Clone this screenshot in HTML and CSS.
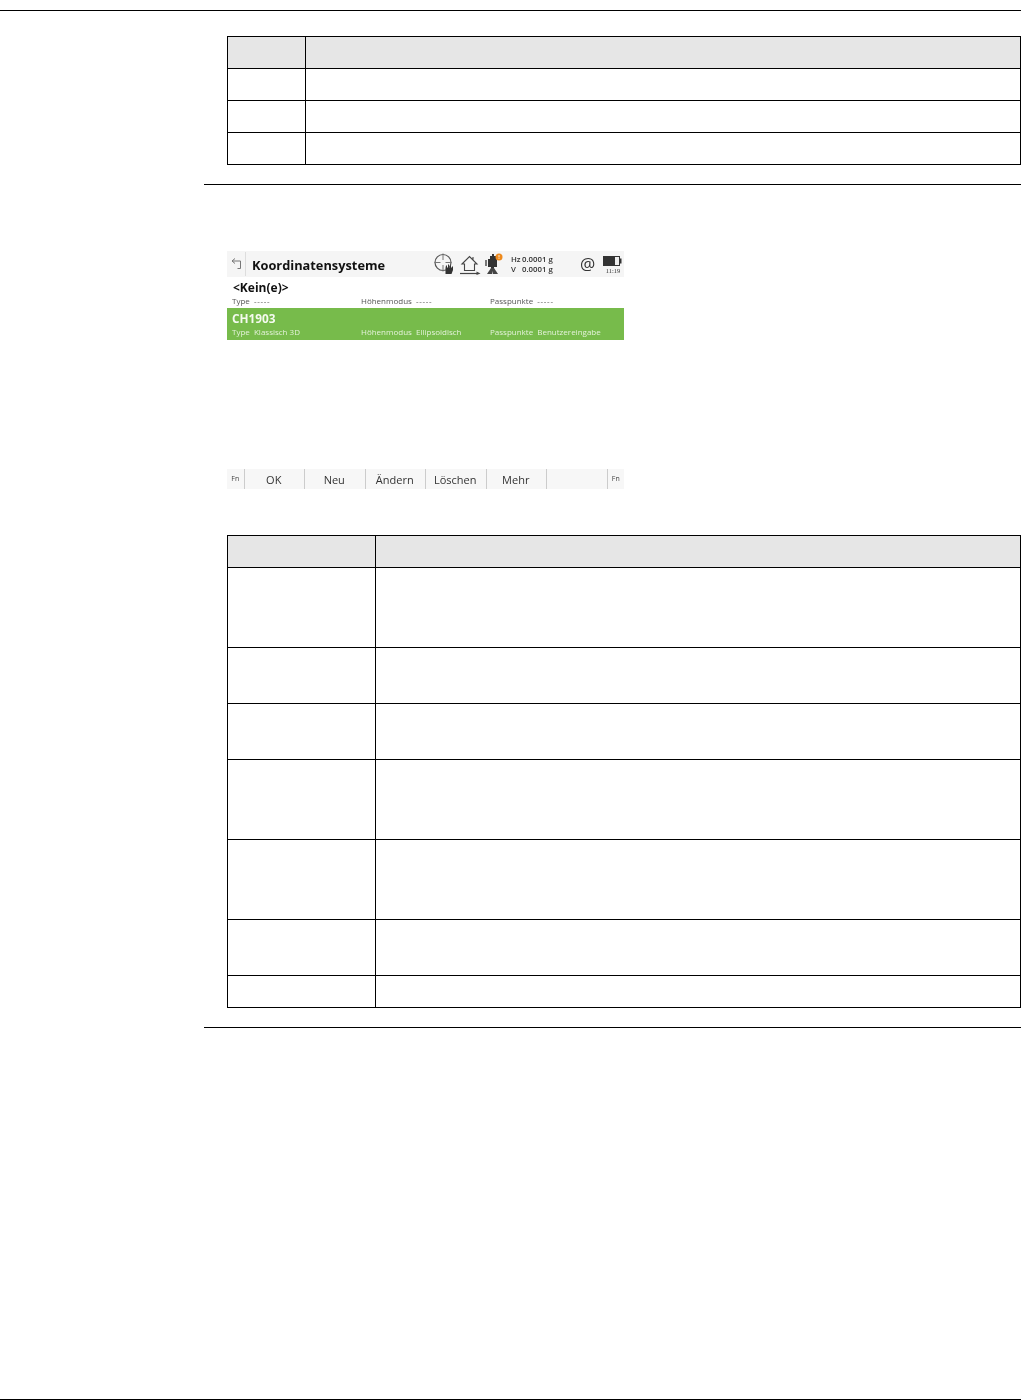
FILE: index.html
```html
<!DOCTYPE html>
<html lang="de">
	<head>
		<title>Koordinatensysteme</title>
		<meta charset="utf-8">
		<link rel="stylesheet" href="styles.css">
	</head>
	<body>
		<div class="toprule"></div>
		<main class="content">
			<table class="grid grid-small">
				<tr class="head"><td class="c1"></td><td></td></tr>
				<tr><td></td><td></td></tr>
				<tr><td></td><td></td></tr>
				<tr><td></td><td></td></tr>
			</table>
			<div class="sectionrule"></div>

			<div class="screen">
				<div class="titlebar">
					<svg class="back" width="14" height="14" viewBox="0 0 14 14"><path d="M5 1.500L2 4L5 6.500M2 4H10.500V11.500H7.500" fill="none" stroke="#777" stroke-width="1"/></svg>
					<span class="titlebar-sep"></span>
					<span class="titletext">Koordinatensysteme</span>
					<svg class="ico-target" width="21" height="22" viewBox="0 0 21 22">
						<circle cx="9" cy="9.500" r="8" fill="none" stroke="#555" stroke-width="1.200"/>
						<path d="M9 0.500V7M9 12V18.500M0.500 9.500H6.500M11.500 9.500H17.500" stroke="#777" stroke-width="1"/>
						<path d="M11.500 21V15L12 12.500H13V14.500H14V11.500H15V14.500H16V12.500H17V14.500H18V13.500H19V17L17.500 21Z" fill="#333"/>
					</svg>
					<svg class="ico-home" width="21" height="22" viewBox="0 0 21 22">
						<path d="M2 11L9.500 3.500L17 11H14.500V17.500H4.500V11Z M13 4V7" fill="none" stroke="#444" stroke-width="1.100"/>
						<path d="M0 20.500H17" stroke="#444" stroke-width="1.200"/>
						<path d="M16.500 18.500L20.500 20.500L16.500 22Z" fill="#444"/>
					</svg>
					<svg class="ico-total" width="20" height="22" viewBox="0 0 20 22">
						<path d="M4 6H6V3H8V1H10V3H12V6H13V14H10V16H7V14H4Z" fill="#333"/>
						<path d="M1 7H3V13H1Z" fill="#777"/>
						<path d="M3 21L7 15H10L14 21Z" fill="#444"/>
						<path d="M8 21L8.500 18L9 21Z" fill="#ddd"/>
						<circle cx="15" cy="4" r="3.500" fill="#ee8a1d"/>
						<path d="M15 2V4.500M15 5.200V6" stroke="#fff" stroke-width="0.800"/>
					</svg>
					<div class="angles">
						<div><span class="ang-l">Hz</span>0.0001 g</div>
						<div><span class="ang-l">V</span>0.0001 g</div>
					</div>
					<span class="at">@</span>
					<div class="batt">
						<svg width="20" height="11" viewBox="0 0 20 11"><rect x="0.500" y="0.500" width="16" height="9" fill="#eee" stroke="#333"/><rect x="1" y="1" width="11" height="8" fill="#333"/><path d="M17 2.500H18.500V7.500H17Z" fill="#333"/></svg>
						<span class="time">11:19</span>
					</div>
				</div>
				<div class="kein">&lt;Kein(e)&gt;</div>
				<div class="fields fields-none">
					<span class="field">Type&nbsp; <span class="dashes">-----</span></span>
					<span class="field">Höhenmodus&nbsp; <span class="dashes">-----</span></span>
					<span class="field">Passpunkte&nbsp; <span class="dashes">-----</span></span>
				</div>
				<div class="selected">
					<div class="selname">CH1903</div>
					<div class="fields">
						<span class="field">Type&nbsp; Klassisch 3D</span>
						<span class="field">Höhenmodus&nbsp; Ellipsoidisch</span>
						<span class="field">Passpunkte&nbsp; Benutzereingabe</span>
					</div>
				</div>
				<div class="softkeys">
					<span class="fn">Fn</span>
					<span class="key">OK</span>
					<span class="key">Neu</span>
					<span class="key">Ändern</span>
					<span class="key">Löschen</span>
					<span class="key">Mehr</span>
					<span class="key"></span>
					<span class="fn fn-right">Fn</span>
				</div>
			</div>

			<table class="grid grid-large">
				<tr class="head"><td class="c1"></td><td></td></tr>
				<tr class="h3"><td></td><td></td></tr>
				<tr class="h2"><td></td><td></td></tr>
				<tr class="h2"><td></td><td></td></tr>
				<tr class="h3"><td></td><td></td></tr>
				<tr class="h3"><td></td><td></td></tr>
				<tr class="h2"><td></td><td></td></tr>
				<tr><td></td><td></td></tr>
			</table>
			<div class="sectionrule"></div>
		</main>
		<div class="bottomrule"></div>
	</body>
</html>
```

FILE: styles.css
```css
* {box-sizing: border-box}

html, body {
	margin: 0;
	height: 1400px;
	background-color: white;
	font-family: "Open Sans", sans-serif;
	overflow: hidden;
}

body {
	display: flex;
	flex-direction: column;
	padding-top: 10px;
}

.toprule, .bottomrule {
	height: 1px;
	background-color: black;
}

.content {
	flex: 1;
	padding: 25px 0 0 204px;
}

/* Empty tables */
.grid {
	border-collapse: collapse;
	table-layout: fixed;
	margin-left: 23px;
	width: 794px;
}

.grid td {
	border: 1px solid black;
	height: 32px;
	padding: 0;
}

.grid .head td {
	background-color: #e6e6e6;
}

.grid-small .c1 {
	width: 78px;
}

.grid-large .c1 {
	width: 148px;
}

.grid .h2 td {
	height: 56px;
}

.grid .h3 td {
	height: 80px;
}

.sectionrule {
	height: 1px;
	margin-top: 19px;
	background-color: black;
}

/* Instrument screen */
.screen {
	width: 397px;
	margin: 66px 0 46px 23px;
	filter: blur(0.35px);
}

.titlebar {
	display: flex;
	align-items: center;
	height: 26px;
	background-color: #f5f5f5;
	color: #222;
}

.back {
	margin-left: 3px;
}

.titlebar-sep {
	width: 1px;
	height: 24px;
	background-color: #ddd;
	margin: 0 6px 0 1px;
}

.titletext {
	font-size: 12.8px;
	font-weight: 700;
	color: #111;
	width: 182px;
	padding-top: 2px;
}

.ico-home {
	margin-left: 5px;
}

.ico-total {
	margin-left: 3px;
}

.angles {
	font-size: 7.8px;
	font-weight: 600;
	line-height: 10px;
	width: 69px;
	margin-left: 7px;
	color: #333;
}

.ang-l {
	display: inline-block;
	width: 11px;
}

.at {
	font-size: 17px;
	line-height: 20px;
	color: #333;
	width: 23px;
}

.batt {
	display: flex;
	flex-direction: column;
	align-items: center;
	width: 20px;
	padding-top: 2px;
}

.batt svg {
	display: block;
}

.time {
	font-family: "Liberation Serif", serif;
	font-size: 6.500px;
	line-height: 7px;
	color: #333;
}

.kein {
	height: 18px;
	font-size: 12px;
	font-weight: 700;
	color: #111;
	padding: 2px 0 0 6px;
	line-height: 17px;
}

.fields {
	display: flex;
	height: 11px;
	padding-left: 5px;
	font-size: 8px;
	line-height: 11px;
	color: #555;
}

.fields-none {
	margin-bottom: 2px;
}

.field {
	width: 129px;
	white-space: nowrap;
}

.dashes {
	letter-spacing: 0.700px;
}

.selected {
	height: 32px;
	background-color: #77bb4b;
}

.selected .fields {
	color: #e4f2da;
}

.selname {
	height: 18px;
	font-size: 11.8px;
	font-weight: 700;
	line-height: 15px;
	padding: 3px 0 0 5px;
	color: #f4faef;
}

.softkeys {
	display: flex;
	align-items: stretch;
	height: 20px;
	margin-top: 129px;
	background-color: #f7f7f7;
}

.fn {
	width: 16.500px;
	font-size: 7px;
	line-height: 20px;
	text-align: center;
	color: #444;
}

.key {
	width: 60.500px;
	padding-right: 1px;
	font-size: 11px;
	line-height: 22px;
	text-align: center;
	color: #333;
	border-left: 1px solid #ccc;
}

.fn-right {
	width: 17.500px;
	border-left: 1px solid #ccc;
}
```
